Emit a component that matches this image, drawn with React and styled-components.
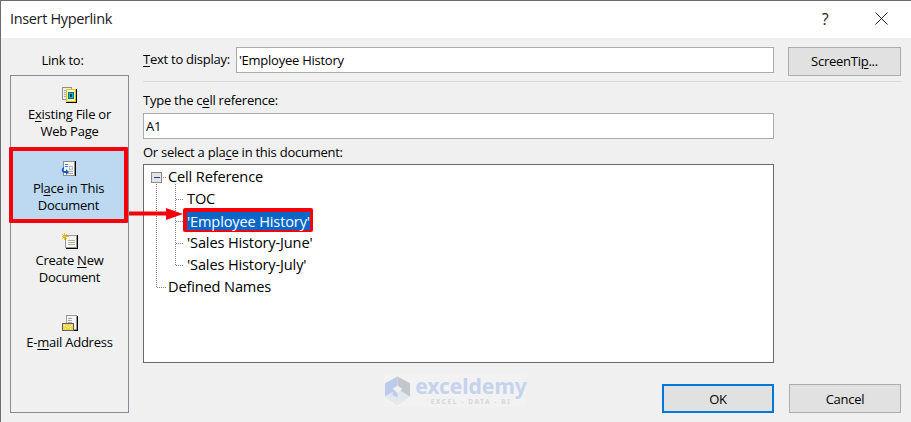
import React from "react";
import styled, { createGlobalStyle } from "styled-components";

const Global = createGlobalStyle`
  html, body { margin: 0; padding: 0; background: #f0f0f0; }
  body { font-family: "Open Sans", "Noto Sans", sans-serif; color: #000; }
  u { text-underline-offset: 2px; text-decoration-thickness: 1px; }
`;

const Dialog = styled.div`
  position: relative;
  width: 911px;
  height: 422px;
  box-sizing: border-box;
  border-top: 1px solid #6d6d6d;
  border-left: 1px solid #6d6d6d;
  background: #f0f0f0;
  overflow: hidden;
  font-size: 13px;
  letter-spacing: -0.25px;
`;
const TitleBar = styled.div`
  height: 37px;
  box-sizing: border-box;
  padding: 0 0 2px 9px;
  background: #fff;
  display: flex;
  align-items: center;
`;
const Title = styled.div`
  flex: 1;
  font-size: 14.5px;
  color: #1a1a1a;
  letter-spacing: -0.35px;
`;
const Help = styled.div`
  width: 16px;
  text-align: center;
  font-size: 16px;
  margin-right: 42px;
  color: #222;
`;
const Close = styled.svg`
  width: 13px;
  height: 13px;
  margin-right: 23px;
`;
const Body = styled.div`
  display: flex;
  padding: 9px 9px 0 9px;
`;
const LeftCol = styled.div`
  width: 119px;
  margin-right: 14px;
  display: flex;
  flex-direction: column;
`;
const LinkLabel = styled.div`
  height: 28px;
  padding-top: 5px;
  box-sizing: border-box;
  text-align: center;
  padding-right: 14px;
  line-height: 16px;
`;
const Panel = styled.div`
  height: 338px;
  box-sizing: border-box;
  border: 1px solid #8b8b96;
  display: flex;
  flex-direction: column;
`;
const Item = styled.div`
  box-sizing: border-box;
  height: ${(p) => p.$h}px;
  padding-top: ${(p) => p.$top}px;
  display: flex;
  flex-direction: column;
  align-items: center;
  line-height: 17px;
  text-align: center;
  flex: none;
  svg { margin-bottom: 3px; flex: none; }
`;
const SelectedItem = styled(Item)`
  width: 119px;
  margin-left: -2px;
  background: #bcd9f1;
  border: 4px solid #f5000a;
  border-radius: 1px;
`;
const RightCol = styled.div`
  width: 759px;
  display: flex;
  flex-direction: column;
`;
const TopRow = styled.div`
  display: flex;
  align-items: flex-start;
`;
const DisplayLabel = styled.label`
  width: 93px;
  line-height: 25px;
`;
const TextBox = styled.input`
  box-sizing: border-box;
  height: 26px;
  width: ${(p) => p.$w}px;
  border: 1px solid #ababab;
  background: #fff;
  padding: 0 0 1px 2px;
  font: inherit;
  letter-spacing: inherit;
  color: #000;
  outline: none;
`;
const Button = styled.button`
  box-sizing: border-box;
  width: ${(p) => p.$w}px;
  height: 29px;
  background: #e1e1e1;
  border: 1px solid #adadad;
  font: inherit;
  letter-spacing: inherit;
  color: #000;
  padding: 0 0 ${(p) => p.$lift || 0}px;
  border-radius: 0;
`;
const ScreenTip = styled(Button)`
  margin-left: 14px;
`;
const DefaultButton = styled(Button)`
  border: 2px solid #0078d7;
`;
const Divider = styled.div`
  height: 1px;
  background: #d9d9d9;
  margin-top: 5px;
`;
const FieldLabel = styled.label`
  display: block;
  line-height: 16px;
  margin-top: ${(p) => p.$top}px;
  margin-bottom: ${(p) => p.$bottom}px;
`;
const Tree = styled.div`
  position: relative;
  box-sizing: border-box;
  width: 631px;
  height: 199px;
  background: #fff;
  border: 1px solid #696969;
  font-size: 14.6px;
  letter-spacing: -0.15px;
`;
const Guides = styled.svg`
  position: absolute;
  left: -1px;
  top: -1px;
  width: 60px;
  height: 140px;
`;
const Row = styled.div`
  height: 22px;
  line-height: 22px;
  padding-left: ${(p) => (p.$child ? 43 : 24)}px;
  white-space: nowrap;
`;
const SelectedFrame = styled.span`
  display: inline-block;
  position: relative;
  line-height: 18px;
  height: 18px;
  margin: -1px 0 0 -4px;
  background: #0a66c8;
  color: #fff;
  border-style: solid;
  border-color: #f5000a;
  border-width: 4px 3px 2px 4px;
  border-radius: 2px;
`;
const Footer = styled.div`
  display: flex;
  width: 758px;
  justify-content: flex-end;
  gap: 15px;
  margin-top: 21px;
`;
const Arrow = styled.svg`
  position: absolute;
  left: 127px;
  top: 204px;
  width: 60px;
  height: 18px;
`;
const Watermark = styled.div`
  position: absolute;
  left: 383px;
  top: 374px;
  width: 142px;
  height: 32px;
  background: #f2f2f2;
  display: flex;
  align-items: center;
  letter-spacing: 0;
`;
const WmLogo = styled.svg`
  width: 27px;
  height: 32px;
  flex: none;
  margin-right: 5px;
`;
const WmText = styled.div`
  display: flex;
  flex-direction: column;
  align-items: center;
  width: 110px;
`;
const WmName = styled.div`
  font-family: "Noto Sans", sans-serif;
  font-weight: 700;
  font-size: 21px;
  line-height: 20px;
  color: #c6d2ee;
`;
const WmTag = styled.div`
  font-family: "Noto Sans", sans-serif;
  font-weight: 700;
  font-size: 6.5px;
  line-height: 9px;
  margin-top: 1px;
  letter-spacing: 1.6px;
  color: #d3d7da;
`;

const IconBox = ({ children }) => (
  <svg width="16" height="16" viewBox="0 0 16 16" shapeRendering="crispEdges">
    {children}
  </svg>
);

const R = ({ x, y, w = 1, h = 1, c }) => <rect x={x} y={y} width={w} height={h} fill={c} />;

const Lines = ({ x, ys, w, c = "#a8a8a8" }) => ys.map((y) => <R key={y} x={x} y={y} w={w} c={c} />);

const ExistingIcon = () => (
  <IconBox>
    <R x={0} y={0} w={10} h={13} c="#8f8f8f" />
    <R x={1} y={1} w={8} h={11} c="#f1f1e6" />
    <Lines x={2} ys={[3, 5, 7, 9]} w={3} />
    <R x={4} y={2} w={11} h={14} c="#000" />
    <R x={4} y={2} w={10} h={13} c="#e9c81c" />
    <R x={5} y={3} w={8} h={11} c="#fff7c4" />
    <R x={6} y={5} w={6} h={7} c="#0f6f80" />
    <R x={7} y={6} w={4} h={5} c="#19b7c9" />
    <R x={8} y={7} w={2} h={3} c="#0c3f63" />
  </IconBox>
);
const PlaceIcon = () => (
  <IconBox>
    <R x={3} y={0} w={12} h={15} c="#000" />
    <R x={2} y={0} w={12} h={15} c="#8f8f8f" />
    <R x={3} y={1} w={10} h={13} c="#f6f6f6" />
    <R x={4} y={3} w={3} h={1} c="#3a86d6" />
    <R x={4} y={5} w={3} h={1} c="#3a86d6" />
    <R x={8} y={5} w={4} h={4} c="#bbb" />
    <R x={9} y={6} w={2} h={2} c="#f6f6f6" />
    <Lines x={7} ys={[10, 12]} w={5} />
    <path d="M3 6 C0 7 0 11 3 12 L5 12 L5 14 L8 11 L5 8 L5 10 L3 10 C2 9 2 8 3 8 Z" fill="#0d5fc7" shapeRendering="auto" />
  </IconBox>
);
const CreateIcon = () => (
  <IconBox>
    <R x={4} y={2} w={12} h={14} c="#000" />
    <R x={3} y={2} w={12} h={13} c="#9a9a9a" />
    <R x={4} y={3} w={10} h={11} c="#f4f4f0" />
    <Lines x={6} ys={[7, 9, 11]} w={7} c="#b5b09c" />
    <R x={2} y={0} w={1} h={7} c="#e8c21a" />
    <R x={0} y={3} w={7} h={1} c="#e8c21a" />
    <R x={0} y={1} w={1} h={1} c="#e8c21a" />
    <R x={1} y={2} w={1} h={1} c="#f4a21a" />
    <R x={4} y={1} w={1} h={1} c="#e8c21a" />
    <R x={3} y={2} w={1} h={1} c="#f4a21a" />
    <R x={1} y={4} w={1} h={1} c="#f4a21a" />
    <R x={0} y={5} w={1} h={1} c="#e8c21a" />
    <R x={3} y={4} w={1} h={1} c="#f4a21a" />
    <R x={4} y={5} w={1} h={1} c="#e8c21a" />
  </IconBox>
);
const MailIcon = () => (
  <IconBox>
    <R x={5} y={1} w={11} h={15} c="#000" />
    <R x={4} y={0} w={11} h={15} c="#9a9a9a" />
    <R x={5} y={1} w={9} h={13} c="#f4f4f4" />
    <Lines x={6} ys={[3, 5, 7]} w={4} c="#a8a8a8" />
    <R x={0} y={8} w={12} h={8} c="#5f5f5f" />
    <R x={1} y={9} w={10} h={6} c="#f3d94a" />
    <R x={2} y={10} w={1} h={1} c="#fff" />
    <R x={4} y={11} w={1} h={1} c="#fff" />
    <R x={6} y={12} w={1} h={1} c="#fff" />
    <R x={8} y={11} w={1} h={1} c="#fff" />
    <R x={9} y={10} w={1} h={1} c="#fff" />
    <R x={3} y={13} w={1} h={1} c="#fff" />
    <R x={8} y={13} w={1} h={1} c="#fff" />
  </IconBox>
);

export default function App() {
  return (
    <>
      <Global />
      <Dialog>
        <TitleBar>
          <Title>Insert Hyperlink</Title>
          <Help>?</Help>
          <Close viewBox="0 0 13 13">
            <path d="M0.5 0.5 L12.5 12.5 M12.5 0.5 L0.5 12.5" stroke="#222" strokeWidth="1" fill="none" />
          </Close>
        </TitleBar>
        <Body>
          <LeftCol>
            <LinkLabel>Link to:</LinkLabel>
            <Panel>
              <Item $h={71} $top={11}>
                <ExistingIcon />
                <span>E<u>x</u>isting File or</span>
                <span>Web Page</span>
              </Item>
              <SelectedItem $h={76} $top={10}>
                <PlaceIcon />
                <span>Pl<u>a</u>ce in This</span>
                <span>Document</span>
              </SelectedItem>
              <Item $h={82} $top={10}>
                <CreateIcon />
                <span>Create <u>N</u>ew</span>
                <span>Document</span>
              </Item>
              <Item $h={80} $top={10}>
                <MailIcon />
                <span>E-<u>m</u>ail Address</span>
              </Item>
            </Panel>
          </LeftCol>
          <RightCol>
            <TopRow>
              <DisplayLabel><u>T</u>ext to display:</DisplayLabel>
              <TextBox $w={538} readOnly value="'Employee History" />
              <ScreenTip $w={113} $lift={2}>ScreenTi<u>p</u>...</ScreenTip>
            </TopRow>
            <Divider />
            <FieldLabel $top={10} $bottom={5}>Type the c<u>e</u>ll reference:</FieldLabel>
            <TextBox $w={631} readOnly value="A1" />
            <FieldLabel $top={5} $bottom={4}>Or select a pla<u>c</u>e in this document:</FieldLabel>
            <Tree>
              <Guides viewBox="0 0 60 140">
                <g stroke="#808080" strokeWidth="1" strokeDasharray="1 1" fill="none" shapeRendering="crispEdges">
                  <path d="M13.5 20 V123.5 H24" />
                  <path d="M18 13.5 H24" />
                  <path d="M32.5 20 V101.5 M32.5 35.5 H41 M32.5 57.5 H41 M32.5 79.5 H41 M32.5 101.5 H41" />
                </g>
                <rect x="8.5" y="8.5" width="10" height="10" fill="#e4e4e4" stroke="#8a8a8a" shapeRendering="crispEdges" />
                <path d="M10.5 13.5 H16.5" stroke="#1f3f7f" shapeRendering="crispEdges" />
              </Guides>
              <Row>Cell Reference</Row>
              <Row $child>TOC</Row>
              <Row $child><SelectedFrame>'Employee History'</SelectedFrame></Row>
              <Row $child>'Sales History-June'</Row>
              <Row $child>'Sales History-July'</Row>
              <Row>Defined Names</Row>
            </Tree>
            <Footer>
              <DefaultButton $w={112}>OK</DefaultButton>
              <Button $w={112}>Cancel</Button>
            </Footer>
          </RightCol>
        </Body>
        <Arrow viewBox="0 0 60 18">
          <path d="M1 6.5 H38 V3 L55 9 L38 15 V10.5 H1 Z" fill="#f5000a" />
        </Arrow>
        <Watermark>
          <WmLogo viewBox="0 0 28 32">
            <path d="M14 1 L1 8 V22 L14 14 Z" fill="#bccbec" />
            <path d="M14 1 L27 8 V22 L14 14 Z" fill="#c3c7cc" />
            <path d="M1 22 L14 14 L27 22 L14 31 Z" fill="#e3e8ea" />
            <path d="M14 10 L19 14 L14 18 L9 14 Z" fill="#f0f0f0" />
            <path d="M9 14 L14 18 V23 L9 20 Z" fill="#bccbec" />
          </WmLogo>
          <WmText>
            <WmName>exceldemy</WmName>
            <WmTag>EXCEL - DATA - BI</WmTag>
          </WmText>
        </Watermark>
      </Dialog>
    </>
  );
}
